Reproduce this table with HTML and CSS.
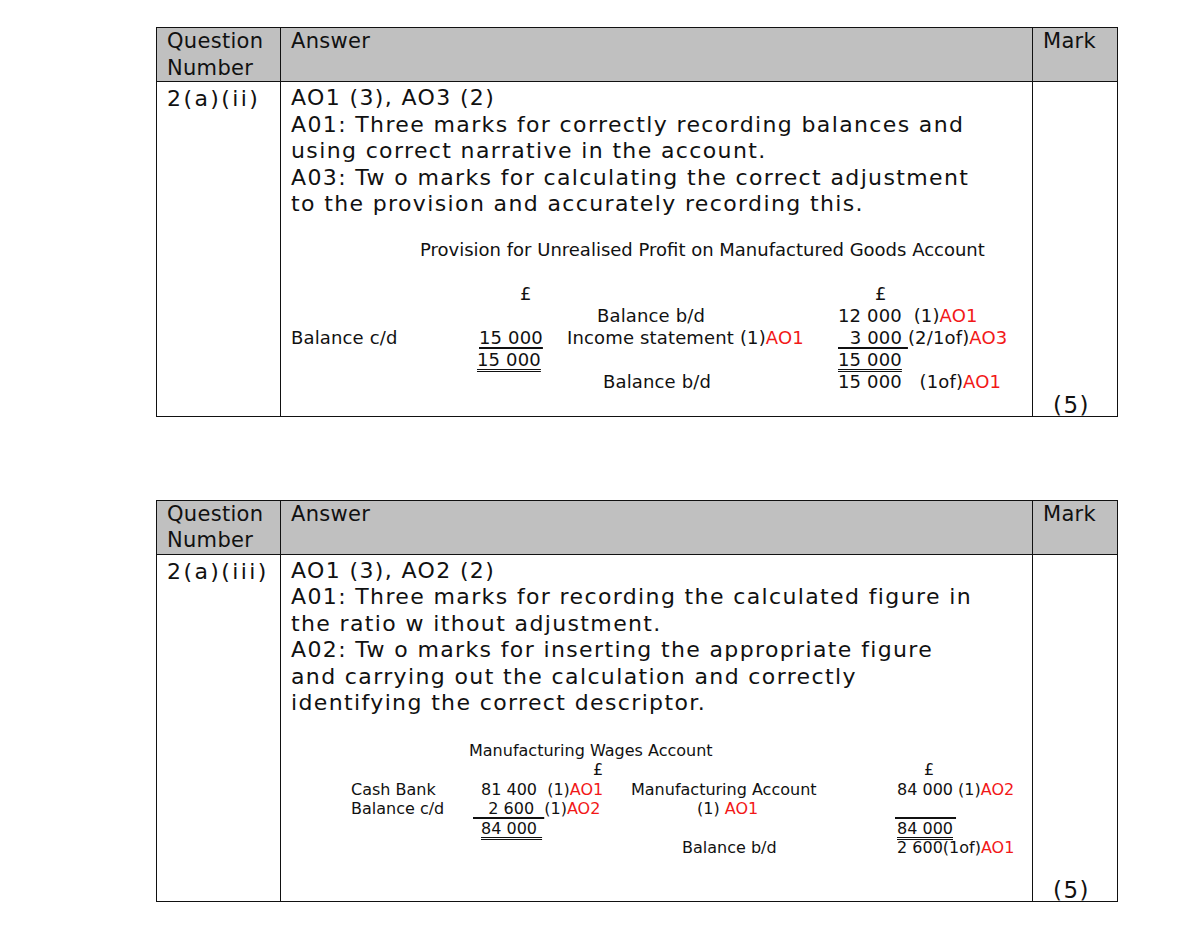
FILE: index.html
```html
<!DOCTYPE html>
<html lang="en">
<head>
<meta charset="utf-8">
<title>Mark scheme</title>
<link rel="stylesheet" href="styles.css">
</head>
<body>
<main class="page">
  <table class="ms">
    <colgroup><col class="c-q"><col class="c-a"><col class="c-m"></colgroup>
    <thead>
      <tr><th>Question Number</th><th>Answer</th><th>Mark</th></tr>
    </thead>
    <tbody>
      <tr class="body-1">
        <td class="qnum">2(a)(ii)</td>
        <td class="ans">
          <p class="txt">AO1 (3), AO3 (2)<br>A01: Three marks for correctly recording balances and<br>using correct narrative in the account.<br>A03: Tw o marks for calculating the correct adjustment<br>to the provision and accurately recording this.</p>
          <div class="acc1-title">Provision for Unrealised Profit on Manufactured Goods Account</div>
          <div class="acc1">
            <span></span><span class="pound1">£</span><span></span><span class="pound1r">£</span>
            <span></span><span></span><span class="n-bal">Balance b/d</span><span>12 000  (1)<em>AO1</em></span>
            <span>Balance c/d</span><span class="amt u1">15 000</span><span class="n-inc">Income statement (1)<em>AO1</em></span><span><u class="u1">  3 000 </u>(2/1of)<em>AO3</em></span>
            <span></span><span class="amt2"><u class="u2">15 000</u></span><span></span><span><u class="u2">15 000</u></span>
            <span></span><span></span><span class="n-bal2">Balance b/d</span><span>15 000   (1of)<em>AO1</em></span>
          </div>
        </td>
        <td class="mark">(5)</td>
      </tr>
    </tbody>
  </table>

  <table class="ms second">
    <colgroup><col class="c-q"><col class="c-a"><col class="c-m"></colgroup>
    <thead>
      <tr><th>Question Number</th><th>Answer</th><th>Mark</th></tr>
    </thead>
    <tbody>
      <tr class="body-2">
        <td class="qnum">2(a)(iii)</td>
        <td class="ans">
          <p class="txt">AO1 (3), AO2 (2)<br>A01: Three marks for recording the calculated figure in<br>the ratio w ithout adjustment.<br>A02: Tw o marks for inserting the appropriate figure<br>and carrying out the calculation and correctly<br>identifying the correct descriptor.</p>
          <div class="acc2-title">Manufacturing Wages Account</div>
          <div class="acc2">
            <span></span><span class="pound2">£</span><span></span><span class="pound2r">£</span>
            <span>Cash Bank</span><span class="w1">81 400  (1)<em>AO1</em></span><span>Manufacturing Account</span><span class="r1">84 000 (1)<em>AO2</em></span>
            <span>Balance c/d</span><span><u class="u1t">   2 600  </u>(1)<em>AO2</em></span><span class="n-ao">(1) <em>AO1</em></span><span><u class="u1t">            </u></span>
            <span></span><span class="w1"><u class="u2">84 000 </u></span><span></span><span class="r1"><u class="u2">84 000</u></span>
            <span></span><span></span><span class="n-bal3">Balance b/d</span><span class="r1">2 600(1of)<em>AO1</em></span>
          </div>
        </td>
        <td class="mark">(5)</td>
      </tr>
    </tbody>
  </table>
</main>
</body>
</html>
```

FILE: styles.css
```css
html, body {
  margin: 0;
  padding: 0;
  background: #fff;
}
body {
  font-family: "DejaVu Sans", Verdana, sans-serif;
  color: #111;
}
.page {
  padding: 27px 0 0 156px;
}
.ms {
  border-collapse: collapse;
  width: 961px;
  table-layout: fixed;
}
.ms.second {
  margin-top: 83px;
}
.c-q { width: 124px; }
.c-a { width: 752px; }
.c-m { width: 85px; }
.ms th, .ms td {
  border: 1px solid #111;
  padding: 0 10px;
  text-align: left;
  vertical-align: top;
}
.ms th {
  background: #c0c0c0;
  font-weight: normal;
  font-size: 21px;
  letter-spacing: 0.3px;
  line-height: 26.5px;
  padding-top: 0;
  padding-bottom: 0;
}
.qnum {
  font-size: 22px;
  letter-spacing: 2.4px;
  line-height: 27px;
  padding-top: 3px !important;
  white-space: nowrap;
}
.ans {
  padding-top: 3px !important;
}
.txt {
  margin: 0;
  font-size: 22px;
  line-height: 26.5px;
  letter-spacing: 1.37px;
  white-space: nowrap;
}
.mark {
  vertical-align: bottom !important;
  font-size: 23px;
  letter-spacing: 1.5px;
  line-height: 22px;
  padding-left: 20px !important;
}
em {
  font-style: normal;
  color: #f21818;
}
u { text-decoration: none; }

/* account 1 */
.acc1-title {
  font-size: 18px;
  margin: 21px 0 0 129px;
  line-height: 22px;
}
.acc1 {
  display: grid;
  grid-template-columns: 186px 68px 293px 1fr;
  font-size: 18px;
  letter-spacing: 0.15px;
  line-height: 22px;
  margin-top: 22px;
  padding-bottom: 23px;
  white-space: pre;
}
.pound1 { padding-left: 43px; }
.pound1r { padding-left: 37px; }
.amt { justify-self: start; padding-left: 2px; }
.amt2 { padding-left: 0; }
.n-inc { padding-left: 22px; }
.n-bal { padding-left: 52px; }
.n-bal2 { padding-left: 58px; }
.u1 { text-decoration: underline; text-decoration-thickness: 2px; text-underline-offset: 3px; }
.u1t { text-decoration: underline; text-decoration-thickness: 1.5px; text-underline-offset: 3px; }
.u2 { text-decoration: underline double; text-underline-offset: 3px; }

/* account 2 */
.acc2-title {
  font-size: 16px;
  line-height: 19.5px;
  margin: 24px 0 0 178px;
}
.acc2 {
  display: grid;
  grid-template-columns: 122px 158px 264px 1fr;
  margin-left: 60px;
  font-size: 16px;
  line-height: 19.5px;
  white-space: pre;
  padding-bottom: 43px;
}
.pound2 { padding-left: 120px; }
.pound2r { padding-left: 29px; }
.w1 { padding-left: 8px; }
.r1 { padding-left: 2px; }
.n-ao { padding-left: 66px; }
.n-bal3 { padding-left: 51px; }
```
